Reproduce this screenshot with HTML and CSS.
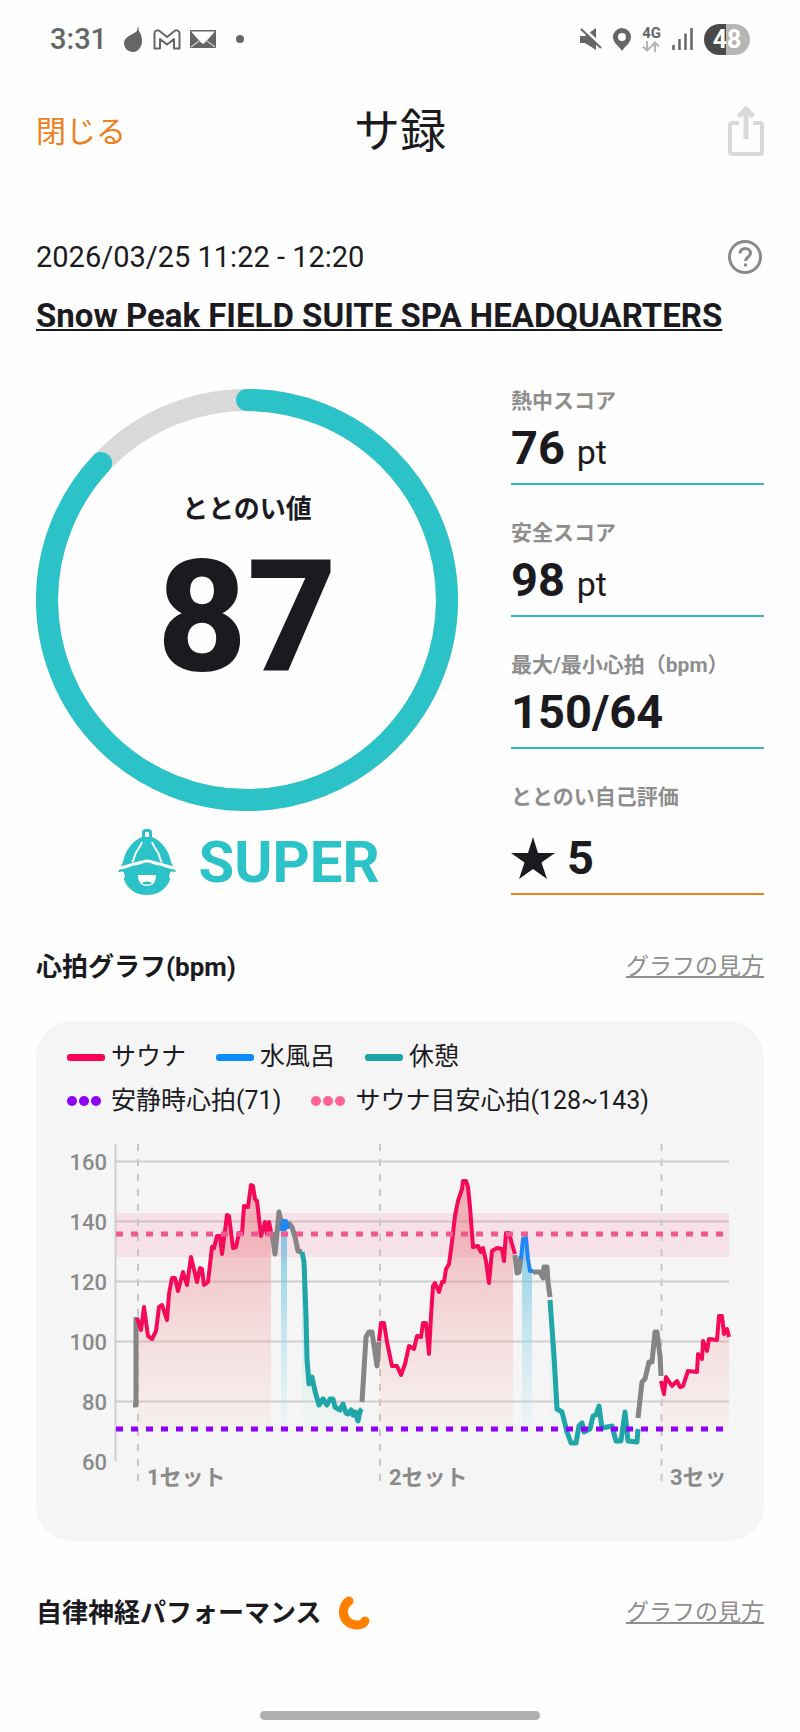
FILE: index.html
```html
<!DOCTYPE html>
<html lang="ja">
<head>
	<meta charset="UTF-8">
	<meta name="viewport" content="width=device-width, initial-scale=1">
	<title>サ録</title>
	<link rel="stylesheet" href="styles.css">
</head>
<body>
	<div class="statusbar">
		<div class="status-left">
			<span class="clock">3:31</span>
			<svg class="drop" width="18" height="26" viewBox="0 0 18 26"><path d="M14 0l1 5c2 3 3 6 3 10 0 6-4 11-9 11s-9-4-9-9c0-6 8-8 13-12z" fill="#666"/></svg>
			<svg class="gmail" width="28" height="21" viewBox="0 0 28 21"><path d="M1.500 4.500c0-3 3-4 5-2.500L14 8l7.500-6c2-1.500 5-.500 5 2.500V19.500H21V10l-7 5.500L7 10v9.500H1.500z" fill="none" stroke="#666" stroke-width="2" stroke-linejoin="round"/></svg>
			<svg class="mail" width="26" height="18" viewBox="0 0 26 18"><path d="M0 0h26v18H0z" fill="#666"/><path d="M1 1.500h24L15 12.500l-2 1.500-2-1.500z" fill="#fff"/><path d="M1 17l8-6M25 17l-8-6" stroke="#fff" stroke-width="1"/></svg>
			<span class="dot"></span>
		</div>
		<div class="status-right">
			<svg width="22" height="24" viewBox="0 0 22 24"><path d="M0 9h5l11-8v22L5 16H0z" fill="#666"/><path d="M2 0l20 19" stroke="#fefefe" stroke-width="3"/><path d="M1 2l20 19" stroke="#666" stroke-width="2"/></svg>
			<svg width="18" height="23" viewBox="0 0 18 23"><path d="M9 0a9 9 0 0 1 9 9c0 6-6 9-9 14-3-5-9-8-9-14a9 9 0 0 1 9-9zm0 5a4 4 0 1 0 0 8 4 4 0 0 0 0-8z" fill="#666"/></svg>
			<div class="network">
				<span>4G</span>
				<svg width="18" height="11" viewBox="0 0 18 11"><path d="M5 0v9M1 5.500l4 4 4-4M13 11V2M9.500 5.500l3.500-4 4 4" fill="none" stroke="#b5b5b5" stroke-width="2"/></svg>
			</div>
			<svg width="21" height="22" viewBox="0 0 21 22"><path d="M1.500 17v5M7.500 11v11M13.500 5.500V22M19.500 0v22" stroke="#666" stroke-width="2.500"/></svg>
			<span class="battery">48</span>
		</div>
	</div>

	<header class="header">
		<a class="close" href="#">閉じる</a>
		<h1>サ録</h1>
		<button class="share" type="button" aria-label="共有">
			<svg width="36" height="50" viewBox="0 0 36 50"><path d="M11 17H4q-2 0-2 2v27q0 2 2 2h28q2 0 2-2V19q0-2-2-2h-7" fill="none" stroke="#d9d9d9" stroke-width="4"/><path d="M18 33V4M10.500 10.500L18 3l7.500 7.500" fill="none" stroke="#d9d9d9" stroke-width="5"/></svg>
		</button>
	</header>

	<main>
		<div class="visit">
			<time>2026/03/25 11:22 - 12:20</time>
			<button class="help" type="button" aria-label="ヘルプ">
				<svg width="34" height="34" viewBox="0 0 34 34"><circle cx="17" cy="17" r="15.500" fill="none" stroke="#8a8a8a" stroke-width="3"/><path d="M12 13.500c0-7 10.500-6.500 10.500-.500 0 4-5 4-5 8" fill="none" stroke="#8a8a8a" stroke-width="3"/><path d="M16 23.500h3v3h-3z" fill="#8a8a8a"/></svg>
			</button>
		</div>
		<a class="facility" href="#">Snow Peak FIELD SUITE SPA HEADQUARTERS</a>

		<section class="summary">
			<div class="score">
				<div class="ring">
					<svg viewBox="0 0 422 422">
						<circle cx="211" cy="211" r="200" fill="none" stroke="#d9d9d9" stroke-width="22"/>
						<circle cx="211" cy="211" r="200" fill="none" stroke="#2bc2c8" stroke-width="22" stroke-linecap="round" pathLength="100" stroke-dasharray="87 100" transform="rotate(-90 211 211)"/>
					</svg>
					<div class="ring-text">
						<span class="ring-label">ととのい値</span>
						<span class="ring-value">87</span>
					</div>
				</div>
				<div class="rank">
					<!-- sauna hat -->
					<svg width="58" height="66" viewBox="0 0 58 66">
						<path d="M25.500 10V3.500q0-2 2-2h3q2 0 2 2V10" fill="none" stroke="#2bc2c8" stroke-width="3"/>
						<path d="M24 8h10c10 4 17 14 19 25l5 10c-7 0-10-3-16-4-5-2-8-3-13-4-5 1-8 2-13 4-6 1-9 4-16 4l5-10C7 22 14 12 24 8z" fill="#2bc2c8"/>
						<path d="M24 13c-2 6-6 9-7 13-1 3-1 5-3 7M34 13c2 6 6 9 7 13 1 3 1 5 3 7" fill="none" stroke="#fefefe" stroke-width="2"/>
						<path d="M5 38c8 1 16-3 24-3s16 4 24 3c2 16-8 28-24 28S3 54 5 38z" fill="#2bc2c8"/>
						<path d="M1 39c6 0 10-3 15-4 5 0 8-3 13-3s8 3 13 3c5 1 9 4 15 4" fill="none" stroke="#fefefe" stroke-width="3"/>
						<path d="M1 45l4-1 1 5M57 45l-4-1-1 5" fill="none" stroke="#fefefe" stroke-width="2"/>
						<path d="M20 46h18c0 7-3 11-9 11s-9-4-9-11z" fill="#fefefe"/>
						<path d="M24 54c3-2 7-2 10 0-3 2-7 2-10 0z" fill="#2bc2c8"/>
					</svg>
					<span>SUPER</span>
				</div>
			</div>
			<dl class="metrics">
				<div class="metric">
					<dt>熱中スコア</dt>
					<dd>76 <small>pt</small></dd>
				</div>
				<div class="metric">
					<dt>安全スコア</dt>
					<dd>98 <small>pt</small></dd>
				</div>
				<div class="metric">
					<dt>最大/最小心拍（bpm）</dt>
					<dd>150/64</dd>
				</div>
				<div class="metric self">
					<dt>ととのい自己評価</dt>
					<dd>
						<svg width="44" height="42" viewBox="0 0 44 42"><path d="M22 0l5 16h17L30.500 25.500 36 42 22 32 8 42l5.500-16.500L0 16h17z" fill="#1b1b1f"/></svg>
						5
					</dd>
				</div>
			</dl>
		</section>

		<div class="section-head">
			<h2>心拍グラフ(bpm)</h2>
			<a href="#">グラフの見方</a>
		</div>

		<section class="card">
			<ul class="legend">
				<li><i class="bar sauna"></i>サウナ</li>
				<li><i class="bar water"></i>水風呂</li>
				<li><i class="bar rest"></i>休憩</li>
			</ul>
			<ul class="legend">
				<li>
					<svg class="dots purple" width="34" height="10" viewBox="0 0 34 10"><circle cx="5" cy="5" r="5"/><circle cx="17" cy="5" r="5"/><circle cx="29" cy="5" r="5"/></svg>
					安静時心拍(71)
				</li>
				<li>
					<svg class="dots pink" width="34" height="10" viewBox="0 0 34 10"><circle cx="5" cy="5" r="5"/><circle cx="17" cy="5" r="5"/><circle cx="29" cy="5" r="5"/></svg>
					サウナ目安心拍(128~143)
				</li>
			</ul>

			<!-- 1bpm = 3 units, 160bpm is y=22 -->
			<svg class="chart" viewBox="0 0 728 360">
				<defs>
					<linearGradient id="saunaFill" gradientUnits="userSpaceOnUse" x1="0" y1="40" x2="0" y2="290">
						<stop offset="0" stop-color="#e86a78" stop-opacity=".55"/>
						<stop offset="1" stop-color="#f3b0a8" stop-opacity=".08"/>
					</linearGradient>
					<linearGradient id="waterFill" gradientUnits="userSpaceOnUse" x1="0" y1="90" x2="0" y2="290">
						<stop offset="0" stop-color="#5cb8de" stop-opacity=".75"/>
						<stop offset="1" stop-color="#a8e6f0" stop-opacity=".1"/>
					</linearGradient>
					<linearGradient id="restFill" gradientUnits="userSpaceOnUse" x1="0" y1="110" x2="0" y2="290">
						<stop offset="0" stop-color="#3dc4bd" stop-opacity=".5"/>
						<stop offset="1" stop-color="#c5f0ea" stop-opacity=".1"/>
					</linearGradient>
					<clipPath id="plot"><path d="M79 0h614v360H79z"/></clipPath>
				</defs>

				<g class="grid">
					<path d="M80 22.500H693M80 82.500H693M80 142.500H693M80 202.500H693M80 262.500H693"/>
					<path d="M79.500 5V322"/>
				</g>
				<path d="M80 74H693V118H80z" fill="#ff5c93" fill-opacity=".13"/>
				<path class="set-line" d="M102 5V348M344 5V348M625.500 5V348"/>

				<g fill="url(#saunaFill)">
					<path d="M101 290V179L105 191 108 168 112 197 116 200 120 192 123 168 126 166 131 181 133 155 136 139 139 139 142 152 147 133 151 146 155 118 161 143 164 129 166 130 168 146 172 143 176 108 178 109 181 97 184 97 186 115 191 76 193 77 197 109 200 108 203 94 206 95 208 67 212 68 215 46 217 47 219 60 221 62 225 97 229 83 231 95 233 83 235 93V290z"/>
					<path d="M344 290V202L345 184 348 184 351 203 356 227 361 227 365 236 369 225 373 207 378 210 381 197 385 198 387 184 390 184 393 215 395 177 397 147 399 144 403 153 406 143 408 143 410 130 413 125 416 103 419 77 422 62 426 50 427 42 430 42 432 48 434 68 437 108 442 107 445 113 447 109 450 122 453 144 456 112 461 109 466 110 468 122 470 94 473 94 477 108V290z"/>
					<path d="M625 290V242L628 255 630 238 636 247 641 242 644 248 647 247 652 232 661 233 662 215 666 220 667 202 671 212 673 200 681 201 683 177 686 177 688 195 691 190 693 198V290z"/>
				</g>
				<g fill="url(#waterFill)">
					<path d="M245 290V92L247 81H250L251 90V290z"/>
					<path d="M486 290V120L488 99H490L492 120 494 132H496V290z"/>
				</g>
				<g fill="url(#restFill)">
					<path d="M266 290V113L268 123 270 177 271 220 273 245 276 238 279 252 283 267 287 259 291 266 297 259 304 272 307 265 312 276 317 272 322 282 326 270V290z"/>
					<path d="M514 290V161L518 217 521 270 526 273 531 290z"/>
				</g>

				<g class="line idle">
					<path d="M97 266H100V178"/>
					<path d="M236 93L239 115 243 73 246 87"/>
					<path d="M252 83L256 88 259 98 262 112 266 113"/>
					<path d="M326 263L330 198 333 193 336 193 341 227 343 203"/>
					<path d="M479 116L481 134 483 133 485 117"/>
					<path d="M497 133H504L507 139 508 128 511 128 512 143 514 158"/>
					<path d="M602 279L606 243 609 240 613 223 616 223 619 193 621 193 624 217 625 237"/>
				</g>
				<g class="line water-line">
					<path d="M245 92L247 82 250 82 252 90M248 82V92"/>
					<path d="M485 120L487 100 490 99 492 120 494 132 497 132"/>
				</g>
				<g class="line rest-line">
					<path d="M266 113L268 123 270 177 271 220 273 245 276 238 279 252 283 266 287 260 291 266 294 260 297 260 299 268 304 271 307 265 310 274 312 275 315 271 317 276 319 273 322 282 324 272 326 270"/>
					<path d="M514 161L518 217 521 270 526 273 531 293 535 304 540 304 543 287 546 284 548 293 554 290 557 277 560 276 563 267 566 289 576 287 580 302 585 302 589 273 592 302 601 303 602 290"/>
				</g>
				<g class="line sauna-line">
					<path d="M101 179L105 191 108 168 112 197 116 200 120 192 123 168 126 166 131 181 133 155 136 139 139 139 142 152 147 133 151 146 155 118 161 143 164 129 166 130 168 146 172 143 176 108 178 109 181 97 184 97 186 115 191 76 193 77 197 109 200 108 203 94 206 95 208 67 212 68 215 46 217 47 219 60 221 62 225 97 229 83 231 95 233 83 235 93"/>
					<path d="M343 202L345 184 348 184 351 203 356 227 361 227 365 236 369 225 373 207 378 210 381 197 385 198 387 184 390 184 393 215 395 177 397 147 399 144 403 153 406 143 408 143 410 130 413 125 416 103 419 77 422 62 426 50 427 42 430 42 432 48 434 68 437 108 442 107 445 113 447 109 450 122 453 144 456 112 461 109 466 110 468 122 470 94 473 94 476 105 479 115"/>
					<path d="M625 242L628 255 630 238 636 247 641 242 644 248 647 247 652 232 661 233 662 215 666 220 667 202 671 212 673 200 681 201 683 177 686 177 688 195 691 190 693 198"/>
				</g>

				<path class="guide target" d="M80 95H693"/>
				<path class="guide resting" d="M80 290H693"/>

				<g class="axis" text-anchor="end">
					<text x="71" y="31">160</text>
					<text x="71" y="91">140</text>
					<text x="71" y="151">120</text>
					<text x="71" y="211">100</text>
					<text x="71" y="271">80</text>
					<text x="71" y="331">60</text>
				</g>
				<g class="axis sets" clip-path="url(#plot)">
					<text x="111" y="346">1セット</text>
					<text x="353" y="346">2セット</text>
					<text x="634" y="346">3セット</text>
				</g>
			</svg>
		</section>

		<div class="section-head">
			<h2>
				自律神経パフォーマンス
				<svg width="32" height="34" viewBox="0 0 32 34"><path d="M10 5C0 12 4 29 18 29q6 0 8-4" fill="none" stroke="#ff7f00" stroke-width="9" stroke-linecap="round" stroke-linejoin="round"/></svg>
			</h2>
			<a href="#">グラフの見方</a>
		</div>
	</main>

	<div class="home-bar"></div>
</body>
</html>
```
FILE: styles.css
```css
body {
  margin: 0;
  background-color: #fefefe;
  color: #1b1b1f;
  font-family: Roboto, "Noto Sans CJK JP", sans-serif;
}

svg {
  flex-shrink: 0;
}

button {
  padding: 0;
  border: none;
  background: none;
  line-height: 0;
  cursor: pointer;
}

/* Status bar */
.statusbar {
  display: flex;
  justify-content: space-between;
  align-items: center;
  height: 78px;
  padding: 0 50px;
  color: #666;
}

.status-left, .status-right {
  display: flex;
  align-items: center;
}

.clock {
  font-size: 29px;
  font-weight: 500;
}

.drop {
  margin-left: 17px;
}

.gmail {
  margin-left: 11px;
}

.mail {
  margin-left: 9px;
}

.dot {
  width: 8px;
  height: 8px;
  margin-left: 20px;
  border-radius: 50%;
  background-color: #666;
}

.status-right {
  gap: 11px;
}

.network {
  display: flex;
  flex-direction: column;
  gap: 2px;
  font-size: 15px;
  font-weight: 700;
  line-height: 12px;
}

.battery {
  width: 46px;
  border-radius: 16px;
  background: linear-gradient(to right, #4a4a4a 48%, #b5b5b5 48%);
  color: white;
  font-size: 25px;
  font-weight: 700;
  line-height: 31px;
  text-align: center;
}

/* Header */
.header {
  display: grid;
  grid-template-columns: 1fr auto 1fr;
  align-items: center;
  height: 106px;
  padding: 0 36px;
}

.header h1 {
  margin: 0;
  font-size: 46px;
  font-weight: 400;
  line-height: 60px;
}

.close {
  padding-bottom: 4px;
  color: #ee7f1a;
  font-size: 30px;
  text-decoration: none;
}

.share {
  justify-self: end;
}

main {
  padding: 56px 36px 0;
}

/* Visit info */
.visit {
  display: flex;
  justify-content: space-between;
  align-items: center;
  padding-right: 2px;
}

.visit time {
  font-size: 29px;
  line-height: 34px;
}

.facility {
  display: block;
  margin-top: 20px;
  color: #1b1b1f;
  font-size: 33px;
  font-weight: 700;
  line-height: 44px;
  text-decoration-thickness: 2px;
  text-underline-offset: 2px;
  text-decoration-skip-ink: none;
}

/* Score summary */
.summary {
  display: grid;
  grid-template-columns: 422fr 253fr;
  gap: 53px;
  margin-top: 51px;
}

.ring {
  display: grid;
}

.ring svg, .ring-text {
  grid-area: 1 / 1;
}

.ring svg {
  width: 100%;
}

.ring-text {
  display: flex;
  flex-direction: column;
  align-items: center;
  padding-top: 100px;
}

.ring-label {
  font-size: 26px;
  font-weight: 700;
  line-height: 40px;
}

.ring-value {
  font-size: 156px;
  font-weight: 800;
  line-height: 176px;
}

.rank {
  display: flex;
  justify-content: center;
  align-items: center;
  gap: 22px;
  margin-top: 18px;
  padding-left: 4px;
  color: #2bc2c8;
  font-size: 58px;
  font-weight: 700;
  line-height: 66px;
}

.metrics {
  display: flex;
  flex-direction: column;
  gap: 36px;
  margin: 0;
}

.metric {
  border-bottom: 2px solid #2fb9bf;
}

.metric dt {
  color: #8e8e8e;
  font-size: 21px;
  font-weight: 700;
  line-height: 24px;
  white-space: nowrap;
}

.metric dd {
  margin: 0;
  font-size: 47px;
  font-weight: 700;
  line-height: 70px;
}

.metric small {
  font-size: 34px;
  font-weight: 400;
  line-height: 1;
}

.self {
  border-color: #f07f1a;
}

.self dd {
  display: flex;
  align-items: center;
  gap: 12px;
  padding-top: 14px;
}

/* Section headings */
.section-head {
  display: flex;
  justify-content: space-between;
  align-items: center;
  margin-top: 52px;
}

.section-head h2 {
  display: flex;
  align-items: center;
  gap: 18px;
  margin: 0;
  font-size: 26px;
  font-weight: 700;
  line-height: 40px;
}

.section-head a {
  color: #8e8e8e;
  font-size: 23px;
  line-height: 36px;
  text-underline-offset: 2px;
  text-decoration-skip-ink: none;
}

/* Heart rate card */
.card {
  margin-top: 34px;
  padding: 14px 0 42px;
  border-radius: 36px;
  background-color: #f6f5f5;
}

.legend {
  display: flex;
  gap: 30px;
  margin: 0;
  padding: 0 31px;
  font-size: 25px;
  line-height: 44px;
  list-style: none;
}

.legend li {
  display: flex;
  align-items: center;
  white-space: nowrap;
}

.bar {
  width: 38px;
  height: 7px;
  margin-right: 6px;
  border-radius: 3px;
}

.sauna {
  background-color: #fb0059;
}

.water {
  background-color: #0a8cff;
}

.rest {
  background-color: #1aa5a8;
}

.dots {
  margin-right: 10px;
}

.purple {
  fill: #9000f5;
}

.pink {
  fill: #ff6296;
}

.chart {
  display: block;
  width: 100%;
  margin-top: 16px;
}

.grid {
  fill: none;
  stroke: #cfcecf;
  stroke-width: 2;
}

.set-line {
  fill: none;
  stroke: #c8c6c7;
  stroke-width: 2;
  stroke-dasharray: 7 8;
}

.line {
  fill: none;
  stroke-width: 5;
  stroke-linejoin: round;
}

.idle {
  stroke: #858585;
}

.water-line {
  stroke: #1f86f2;
  stroke-width: 4;
}

.rest-line {
  stroke: #20a5a8;
}

.sauna-line {
  stroke: #f50a5a;
  stroke-width: 4;
}

.guide {
  stroke-width: 5;
  stroke-dasharray: 7 8;
}

.target {
  stroke: #f0588f;
}

.resting {
  stroke: #8f00f5;
}

.axis {
  fill: #8b8b8b;
  font-size: 22px;
  font-weight: 500;
}

.sets {
  font-weight: 700;
}

.home-bar {
  width: 35%;
  height: 9px;
  margin: 78px auto 11px;
  border-radius: 5px;
  background-color: #b0b0b0;
}
```
